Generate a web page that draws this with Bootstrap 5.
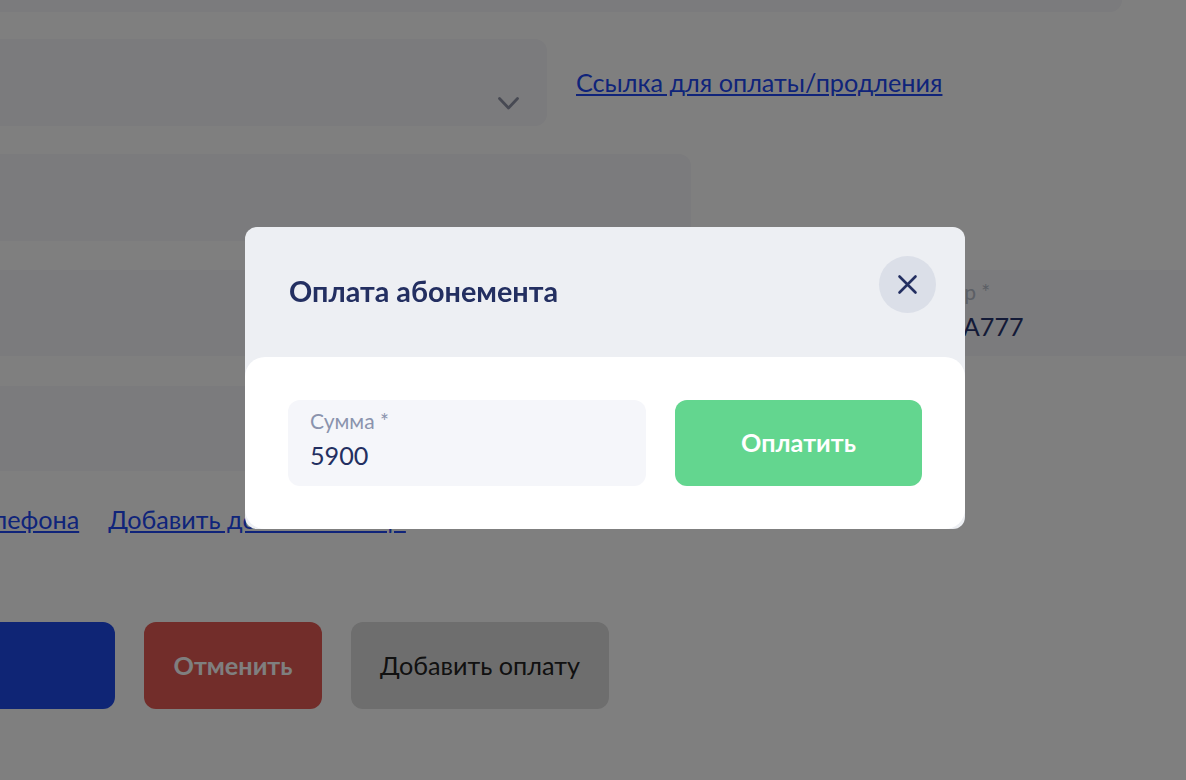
<!DOCTYPE html>
<html lang="ru">
<head>
<meta charset="utf-8">
<title>Оплата абонемента</title>
<link href="https://cdn.jsdelivr.net/npm/bootstrap@5.3.0/dist/css/bootstrap.min.css" rel="stylesheet">
<style>
html, body { height: 100%; overflow: hidden; background: #fff; }
body { font-family: Lato, "Noto Sans", sans-serif; color: #232f61; }
.page-wrap { width: 1600px; margin: -75px 0 0 -200px; }
.fld { background: #f6f6fa; border-radius: 12px; padding: 9px 22px; }
.fld-label { display: block; font-size: 21px; line-height: 26px; color: #b8becb; }
.fld-value { display: block; font-size: 25.2px; line-height: 32px; margin-top: 5px; color: #26346e; }
.top-bar { width: 1322px; height: 87px; margin-bottom: 27px; }
.sel-row { height: 87px; margin-bottom: 28px; }
.sel-box { width: 747px; height: 87px; padding-bottom: 10px; }
.chev { width: 21px; height: 13px; margin: 0 6px 6px 0; }
.page-link-a { color: #2048f4; font-size: 25.2px; line-height: 30px; margin: 0 0 2px 29px; text-decoration: underline; }
.wide-box { width: 891px; height: 87px; margin-bottom: 29px; }
.split-row { height: 86px; margin-bottom: 30px; }
.f-left { width: 1000px; }
.f-right { flex: 1; padding-left: 37px; border-radius: 0; }
.plain-box { width: 1000px; height: 85px; margin-bottom: 32px; }
.links-row { height: 32px; margin-bottom: 87px; gap: 29px; }
.links-row a { color: #2048f4; font-size: 25.2px; line-height: 32px; text-decoration: underline; white-space: nowrap; }
.phone-link { margin-left: -32px; }
.btn-row { gap: 29px; }
.act { height: 87px; border: 0; border-radius: 12px; font-size: 25.2px; padding: 0; }
.act-blue { width: 315px; background: #1e4aea; }
.act-red { width: 178px; background: #e45a54; color: #fff; font-weight: 700; }
.act-grey { width: 258px; background: #dcdcdc; color: #222; }
.modal-dialog.pay-dialog { max-width: 720px; width: 720px; margin: 227px 0 0 245px; }
.pay-content { background: #edeff3; border: 0; border-radius: 12px; height: 302px; overflow: hidden; }
.pay-head { height: 130px; padding: 29px 29px 0 44px; border: 0; align-items: flex-start; justify-content: space-between; }
.pay-title { font-size: 28.8px; font-weight: 700; line-height: 70px; margin: 0; color: #232f61; }
.pay-close { width: 57px; height: 57px; border-radius: 50%; background: #dbdfe8; border: 0; padding: 0; }
.pay-close svg { width: 57px; height: 57px; display: block; }
.pay-body { background: #fff; border-radius: 20px; height: 172px; padding: 43px; flex: none; gap: 29px; }
.sum-fld { width: 358px; height: 86px; background: #f5f6fa; border-radius: 12px; padding: 9px 22px; }
.sum-label { display: block; font-size: 21px; line-height: 24px; color: #8a93ad; }
.sum-value { display: block; font-size: 25.2px; line-height: 32px; margin-top: 6px; color: #232f61; }
.pay-btn { width: 247px; height: 86px; background: #63d68f; border: 0; border-radius: 12px; color: #fff; font-size: 25.2px; font-weight: 700; padding: 0; }
</style>
</head>
<body>
<div class="page-wrap">
  <div class="fld top-bar"></div>
  <div class="d-flex align-items-center sel-row">
    <div class="fld sel-box d-flex justify-content-end align-items-end">
      <svg class="chev" viewBox="0 0 21 13" fill="none"><path d="M1.5 1.5 10.5 11 19.5 1.5" stroke="#8f93a6" stroke-width="2.8" stroke-linecap="round" stroke-linejoin="round"/></svg>
    </div>
    <a class="page-link-a" href="#">Ссылка для оплаты/продления</a>
  </div>
  <div class="fld wide-box"></div>
  <div class="d-flex split-row">
    <div class="fld f-left h-100"></div>
    <div class="fld f-right h-100 ms-5"><span class="fld-label">Госномер *</span><span class="fld-value">А123АА777</span></div>
  </div>
  <div class="fld plain-box"></div>
  <div class="d-flex links-row">
    <a class="phone-link" href="#">Добавить номер телефона</a>
    <a href="#">Добавить дополнит лицо</a>
  </div>
  <div class="d-flex btn-row">
    <button class="act act-blue" type="button"></button>
    <button class="act act-red" type="button">Отменить</button>
    <button class="act act-grey" type="button">Добавить оплату</button>
  </div>
</div>

<div class="modal-backdrop show"></div>
<div class="modal d-block" tabindex="-1">
  <div class="modal-dialog pay-dialog">
    <div class="modal-content pay-content">
      <div class="modal-header pay-head">
        <h5 class="modal-title pay-title">Оплата абонемента</h5>
        <button class="pay-close" type="button" aria-label="Закрыть">
          <svg viewBox="0 0 57 57" fill="none"><path d="M20.5 20.5 36.5 36.5M36.5 20.5 20.5 36.5" stroke="#232f61" stroke-width="2.6" stroke-linecap="round"/></svg>
        </button>
      </div>
      <div class="modal-body pay-body d-flex">
        <div class="sum-fld"><span class="sum-label">Сумма *</span><span class="sum-value">5900</span></div>
        <button class="pay-btn" type="button">Оплатить</button>
      </div>
    </div>
  </div>
</div>
<script src="https://cdn.jsdelivr.net/npm/bootstrap@5.3.0/dist/js/bootstrap.bundle.min.js"></script>
</body>
</html>
